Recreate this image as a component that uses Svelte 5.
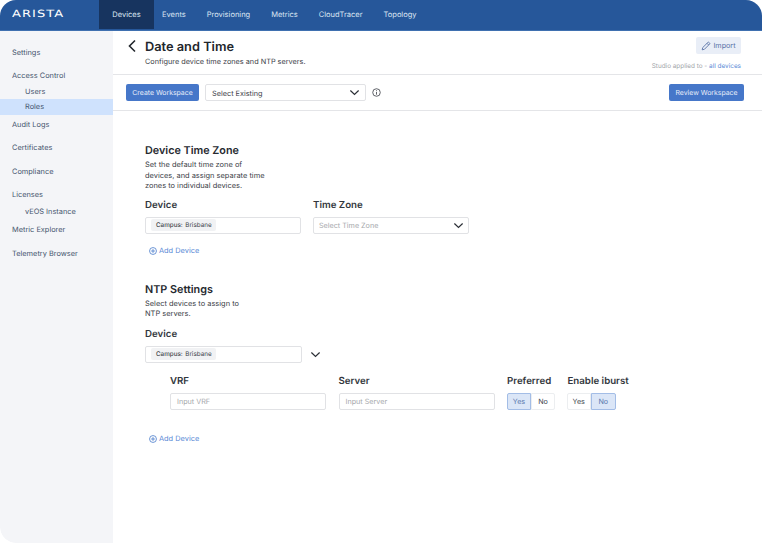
<script>
  const tabs = ['Devices', 'Events', 'Provisioning', 'Metrics', 'CloudTracer', 'Topology'];
  const side = [
    { label: 'Settings', cls: 'first' },
    { label: 'Access Control', cls: 'top' },
    { label: 'Users', cls: 'sub' },
    { label: 'Roles', cls: 'sub active' },
    { label: 'Audit Logs', cls: 'audit' },
    { label: 'Certificates', cls: 'top' },
    { label: 'Compliance', cls: 'top' },
    { label: 'Licenses', cls: 'top' },
    { label: 'vEOS Instance', cls: 'sub veos' },
    { label: 'Metric Explorer', cls: 'metric' },
    { label: 'Telemetry Browser', cls: 'top last' }
  ];
</script>

{#snippet chevron(w)}
  <svg class="chev" width={w} height={w} viewBox="0 0 12 12" fill="none"><path d="M1.5 3.8 6 8.2l4.5-4.4" stroke="#2b2f36" stroke-width="1.3" /></svg>
{/snippet}

{#snippet add()}
  <div class="add">
    <svg width="8" height="8" viewBox="0 0 10 10" fill="none"><circle cx="5" cy="5" r="4.3" stroke="#4a7ccc" stroke-width="1" /><path d="M5 2.6v4.8M2.6 5h4.8" stroke="#4a7ccc" stroke-width="1" /></svg>
    <span>Add Device</span>
  </div>
{/snippet}

{#snippet tag()}
  <span class="tag"><b>Campus:</b> Brisbane</span>
{/snippet}

<div class="app">
  <header>
    <div class="logo"><span>ARISTA</span></div>
    <nav>
      {#each tabs as t, i}
        <div class="tab" class:on={i === 0}>{t}</div>
      {/each}
    </nav>
  </header>
  <div class="body">
    <aside>
      {#each side as s}
        <div class="item {s.cls}">{s.label}</div>
      {/each}
    </aside>
    <main>
      <div class="head">
        <svg class="back" width="10" height="14" viewBox="0 0 10 14" fill="none"><path d="M8 1.5 2.5 7 8 12.5" stroke="#22262c" stroke-width="1.6" /></svg>
        <div class="titles">
          <h1>Date and Time</h1>
          <p>Configure device time zones and NTP servers.</p>
        </div>
        <div class="meta">
          <div class="import">
            <svg width="10" height="10" viewBox="0 0 10 10" fill="none"><path d="M1.2 8.8 1.7 6.6 6.8 1.5a.9.9 0 0 1 1.3 0l.4.4a.9.9 0 0 1 0 1.3L3.4 8.3ZM6 2.3 7.7 4" stroke="#5a74a8" stroke-width=".9" /></svg>
            <span>Import</span>
          </div>
          <div class="applied">Studio applied to - <span>all devices</span></div>
        </div>
      </div>
      <div class="toolbar">
        <div class="btn">Create Workspace</div>
        <div class="select existing"><span>Select Existing</span>{@render chevron(11)}</div>
        <svg class="info" width="9" height="9" viewBox="0 0 10 10" fill="none"><circle cx="5" cy="5" r="4.2" stroke="#3b3f46" stroke-width=".9" /><path d="M5 4.4v3M5 2.5v1" stroke="#3b3f46" stroke-width=".9" /></svg>
        <div class="btn review">Review Workspace</div>
      </div>
      <div class="content">
        <section class="tz">
          <h2>Device Time Zone</h2>
          <p class="desc">Set the default time zone of<br />devices, and assign separate time<br />zones to individual devices.</p>
          <div class="fields">
            <div class="field">
              <div class="lab">Device</div>
              <div class="input">{@render tag()}</div>
            </div>
            <div class="field">
              <div class="lab">Time Zone</div>
              <div class="input between"><span class="ph">Select Time Zone</span>{@render chevron(11)}</div>
            </div>
          </div>
          {@render add()}
        </section>
        <section class="ntp">
          <h2>NTP Settings</h2>
          <p class="desc">Select devices to assign to<br />NTP servers.</p>
          <div class="lab dev">Device</div>
          <div class="devrow">
            <div class="input wide">{@render tag()}</div>
            {@render chevron(11)}
          </div>
          <div class="servers">
            <div class="field">
              <div class="lab">VRF</div>
              <div class="input"><span class="ph">Input VRF</span></div>
            </div>
            <div class="field">
              <div class="lab">Server</div>
              <div class="input"><span class="ph">Input Server</span></div>
            </div>
            <div class="field small">
              <div class="lab">Preferred</div>
              <div class="toggle pref"><span class="sel">Yes</span><span>No</span></div>
            </div>
            <div class="field small">
              <div class="lab">Enable iburst</div>
              <div class="toggle burst"><span>Yes</span><span class="sel">No</span></div>
            </div>
          </div>
          {@render add()}
        </section>
      </div>
    </main>
  </div>
</div>

<style>
  :global(body) { margin: 0; background: #fff; }
  .app {
    width: 762px; height: 543px; overflow: hidden; display: flex; flex-direction: column;
    font-family: Inter, "Liberation Sans", sans-serif; color: #2b2f36; background: #fff;
    border-radius: 16px 16px 0 16px; text-rendering: geometricPrecision;
  }
  header { height: 30px; flex: none; background: #26579a; display: flex; border-bottom: 1px solid #3f70b0; }
  .logo {
    width: 99px; flex: none; box-sizing: border-box; padding: 9px 0 0 12px;
    color: #fff; font-family: "DejaVu Sans", sans-serif; font-size: 10px; line-height: 12px; letter-spacing: .8px;
  }
  .logo span { display: inline-block; transform: scaleX(1.3); transform-origin: left center; }
  nav { display: flex; }
  .tab { padding: 0 8px; margin-right: 5px; line-height: 30px; height: 29px; font-size: 7.5px; color: #dbe5f2; }
  .tab.on { background: #17345f; padding: 0; margin-right: 0; width: 55px; text-align: center; }
  .body { flex: 1; display: flex; min-height: 0; }
  aside {
    width: 113px; flex: none; background: #f4f5f8; border-bottom-left-radius: 16px;
    font-size: 7.4px; color: #46566f; padding-top: 15px; box-sizing: border-box;
  }
  .item { height: 14px; line-height: 14px; padding-left: 12px; }
  .top { margin-top: 9.2px; }
  .top.last { margin-top: 10px; }
  .audit { margin-top: 3px; }
  .metric { margin-top: 4px; }
  .sub { padding-left: 25px; margin-top: 2px; }
  .sub.veos { margin-top: 3px; }
  .sub.active { background: #cfe2fd; height: 16px; line-height: 16px; margin-top: 0; }
  main { flex: 1; min-width: 0; display: flex; flex-direction: column; }
  .head {
    height: 43px; flex: none; display: flex; border-bottom: 1px solid #e4e5e8;
    padding: 0 21px 0 13px;
  }
  .back { margin: 8px 8px 0 1px; }
  .titles { flex: 1; padding-top: 9px; }
  h1 { margin: 0; font-size: 12.8px; line-height: 16px; font-weight: 600; color: #22262c; }
  .titles p { margin: 0; font-size: 7.3px; line-height: 11px; color: #3c4148; }
  .meta { display: flex; flex-direction: column; align-items: flex-end; padding-top: 6px; }
  .import {
    width: 45px; height: 17px; background: #e9eef7; border-radius: 2px; display: flex; align-items: center;
    justify-content: center; gap: 2px; font-size: 7.2px; color: #5a74a8;
  }
  .applied { margin-top: 7px; font-size: 6.4px; line-height: 10px; color: #a2a5aa; }
  .applied span { color: #5b8ad6; }
  .toolbar {
    height: 35px; flex: none; display: flex; align-items: center; padding: 0 18px 0 13px; border-bottom: 1px solid #e4e5e8;
  }
  .btn {
    width: 73px; height: 17px; background: #4677c9; color: #e8eef9; border-radius: 2px; font-size: 6.9px;
    line-height: 18px; text-align: center;
  }
  .review { width: 75px; margin-left: auto; }
  .select, .input {
    box-sizing: border-box; height: 17px; background: #fff; border: 1px solid #e1e2e5; border-radius: 2px;
    display: flex; align-items: center;
  }
  .existing { width: 161px; margin-left: 6px; padding: 0 5px 0 6px; justify-content: space-between; font-size: 7.3px; color: #3c4148; }
  .existing span { padding-top: 1px; }
  .info { margin-left: 6px; }
  .content { padding: 33px 0 0 32px; }
  h2 { margin: 0; font-size: 10.8px; line-height: 14px; font-weight: 600; color: #26292f; }
  .desc { margin: 2px 0 0; font-size: 7.45px; line-height: 10.6px; color: #3c4148; }
  .lab { font-size: 9.7px; line-height: 12px; font-weight: 600; color: #33373d; }
  .fields { display: flex; gap: 12px; margin-top: 8px; }
  .field { width: 156px; }
  .field .input { margin-top: 5px; padding: 0 5px; width: 156px; }
  .between { justify-content: space-between; padding: 0 4px 0 4px !important; }
  .tag {
    height: 12px; display: inline-flex; align-items: center; gap: 2.5px; background: #f1f2f4; border-radius: 2px;
    padding: 0 4px 0 5px; font-size: 6.3px; color: #41454b;
  }
  .tag b { font-weight: 500; }
  .ph { font-size: 7.2px; color: #a6a8ac; padding: 1px 0 0 1px; }
  .add {
    display: flex; align-items: center; gap: 2.5px; margin: 11px 0 0 3.5px; height: 12px;
    font-size: 7.4px; color: #5b8ad6;
  }
  .ntp { margin-top: 26px; }
  .lab.dev { margin-top: 9px; }
  .devrow { display: flex; align-items: center; gap: 8px; margin-top: 5px; }
  .input.wide { width: 157px; padding: 0 5px; }
  .servers { display: flex; gap: 12.5px; margin: 13px 0 0 25px; }
  .field.small { width: auto; }
  .toggle {
    margin-top: 5px; height: 17px; box-sizing: border-box; display: flex; border-radius: 2px; font-size: 7.2px; color: #42464d;
    width: 49px;
  }
  .toggle.pref { width: 48px; }
  .toggle.burst { margin-left: -1px; }
  .toggle span { flex: 1; text-align: center; line-height: 16px; border: 1px solid #eceef0; }
  .toggle span:first-child { border-radius: 2px 0 0 2px; }
  .toggle span:last-child { border-radius: 0 2px 2px 0; }
  .toggle span.sel { background: #dbe6f7; border-color: #a3bde6; color: #5a78ad; }
  .ntp .add { margin-top: 23px; }
</style>
